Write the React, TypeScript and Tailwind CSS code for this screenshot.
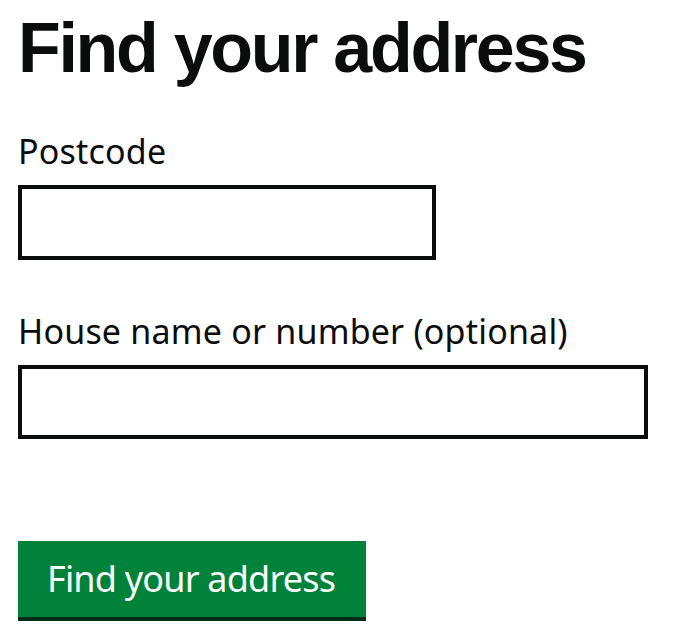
import React from 'react';

export default function App() {
  return (
    <div className="min-h-screen bg-white px-[18px] pt-[13px] text-[#0b0c0c] [font-family:'Liberation_Sans',Arial,sans-serif]">
      <h1 className="text-[70px] font-bold leading-[70px] tracking-[-2.3px]">Find your address</h1>

      <form className="mt-[48px]" onSubmit={(e) => e.preventDefault()}>
        <div>
          <label htmlFor="postcode" className="block text-[34px] leading-[40px] tracking-[0.2px] [font-family:'Noto_Sans',sans-serif]">
            Postcode
          </label>
          <input
            id="postcode"
            type="text"
            className="mt-[14px] block h-[75px] w-[418px] border-4 border-[#0b0c0c] bg-white px-3 text-[33px] outline-none"
          />
        </div>

        <div className="mt-[51px]">
          <label htmlFor="house" className="block text-[34px] leading-[40px] tracking-[0.2px] [font-family:'Noto_Sans',sans-serif]">
            House name or number (optional)
          </label>
          <input
            id="house"
            type="text"
            className="mt-[14px] block h-[74px] w-[630px] border-4 border-[#0b0c0c] bg-white px-3 text-[33px] outline-none"
          />
        </div>

        <button
          type="submit"
          className="mt-[102px] flex h-[76px] w-[348px] items-center whitespace-nowrap bg-[#00823b] pl-[29px] text-[36px] leading-none tracking-[-0.8px] text-white shadow-[0_4px_0_#002d18] [font-family:'Noto_Sans',sans-serif]"
        >
          Find your address
        </button>
      </form>
    </div>
  );
}
